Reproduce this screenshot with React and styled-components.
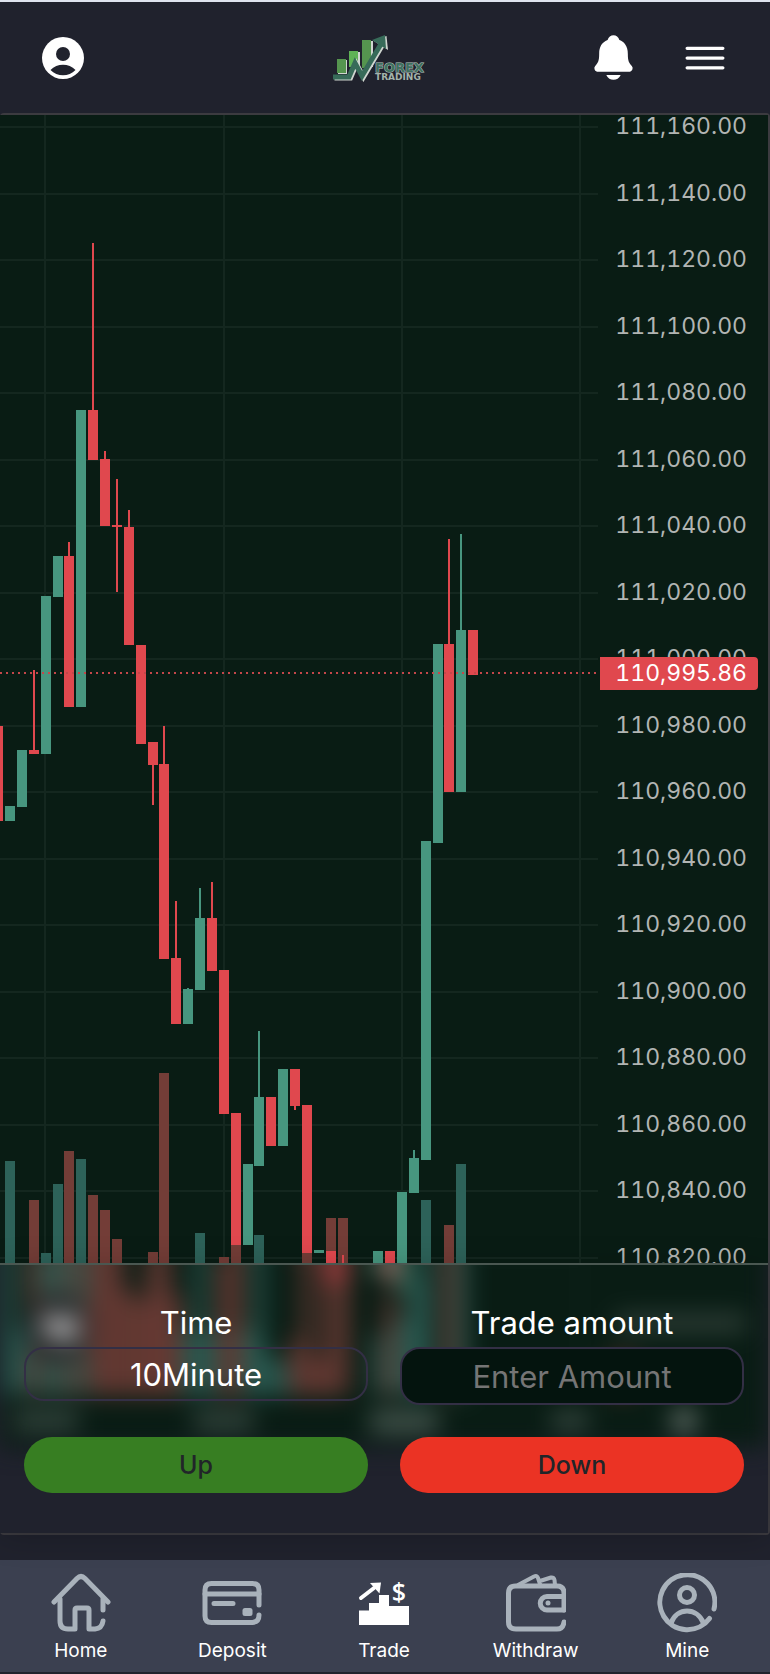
import { useState } from "react";
import styled, { createGlobalStyle } from "styled-components";
import { IoMenuOutline, IoNotifications } from "react-icons/io5";

const GlobalStyles = createGlobalStyle`
  *, *::before, *::after {
    box-sizing: border-box;
    margin: 0;
    padding: 0;
  }

  body {
    background-color: #20222d;
    color: #fff;
    font-family: Inter, "Liberation Sans", sans-serif;
  }
`;

const Page = styled.div`
  display: flex;
  flex-direction: column;
  min-height: 100vh;
  border-top: 2px solid #dfe4ee;
`;

const Header = styled.header`
  display: grid;
  grid-template-columns: 1fr auto 1fr;
  align-items: center;
  height: 111px;
  padding: 0 39px 0 26px;
`;

const Actions = styled.div`
  display: flex;
  align-items: center;
  justify-content: flex-end;
  gap: 40px;
`;

const IconButton = styled.button`
  display: flex;
  width: fit-content;
  padding: ${(props) => props.$pad || "0"};
  border: none;
  background: none;
  color: #fff;
  cursor: pointer;
`;

const Card = styled.main`
  position: relative;
  padding-bottom: 86px;
  border: 2px solid #3c3b40;
  border-left: none;
  border-radius: 4px;
`;

const ChartArea = styled.div`
  display: flex;
  height: 1332px;
  overflow: hidden;
  background-color: #091c14;
`;

const Plot = styled.svg`
  flex: 1;
  min-width: 0;
  height: 100%;
`;

const PriceScale = styled.svg`
  flex: none;
  width: 168px;
  height: 100%;
  font-size: 23px;
  font-variant-numeric: tabular-nums;
`;

// Sits over the lower part of the chart
const TradeForm = styled.form`
  position: absolute;
  right: 0;
  bottom: 0;
  left: 0;
  z-index: 0;
  display: grid;
  grid-template-columns: 1fr 1fr;
  column-gap: 32px;
  row-gap: 32px;
  padding: 34px 24px 40px;
  border-top: 2px solid #4a5751;
  box-shadow: 0 4px 30px rgba(0, 0, 0, 0.2);
`;

const FrostedLayer = styled.div`
  position: absolute;
  inset: 0;
  z-index: -1;
  display: flex;
  flex-direction: column;
  justify-content: flex-end;
  overflow: hidden;
  padding-bottom: 86px;
  background-color: #20222d;

  ${ChartArea} {
    flex: none;
    filter: blur(12px);
  }
`;

const Field = styled.div`
  display: flex;
  flex-direction: column;
`;

const Label = styled.label`
  font-size: 31px;
  line-height: 48px;
  text-align: center;
`;

const Select = styled.select`
  width: 100%;
  height: 54px;
  border: 2px solid #332f45;
  border-radius: 20px;
  appearance: none;
  background: transparent;
  color: #fff;
  font: inherit;
  font-size: 31px;
  text-align: center;
  text-align-last: center;
`;

const Input = styled.input`
  width: 100%;
  height: 58px;
  border: 2px solid #332f45;
  border-radius: 20px;
  background-color: #04140e;
  color: #fff;
  font: inherit;
  font-size: 31px;
  text-align: center;

  &::placeholder {
    color: #757575;
    opacity: 1;
  }
`;

const TradeButton = styled.button`
  height: 56px;
  border: none;
  border-radius: 28px;
  background-color: ${(props) => (props.$up ? "#377e22" : "#eb3324")};
  color: #212529;
  font: inherit;
  font-size: 25px;
  font-weight: 500;
  cursor: pointer;
`;

const Nav = styled.nav`
  display: grid;
  grid-template-columns: repeat(5, 1fr);
  height: 113px;
  margin-top: 25px;
  padding: 13px 7px 0 5px;
  border-bottom: 1px solid #20222d;
  background-color: #3b4050;
`;

const NavItem = styled.a`
  display: flex;
  flex-direction: column;
  align-items: center;
  gap: 6px;
  color: #fff;
  font-size: 19px;
  line-height: 24px;
  text-decoration: none;
`;

const NavIcon = styled.svg`
  width: 60px;
  height: 60px;
  color: ${(props) => (props.$active ? "#fff" : "#a9b2bb")};
  fill: none;
  stroke: currentColor;
  stroke-width: 5;
  stroke-linecap: round;
  stroke-linejoin: round;
`;

const GREEN = "#47967f";
const RED = "#e0484e";

const STEP = 11.875;
const FIRST_X = 10;
const BASE_PRICE = 111160;
const BASE_Y = 12;
const PX_PER_TICK = 3.325;
const VOLUME_BOTTOM = 1280;

// slot, direction, high, body top, body bottom, low
const candles = [
  [-1, 0, 611, 611, 706, 706],
  [0, 1, 691, 691, 706, 706],
  [1, 1, 635, 635, 692, 692],
  [2, 0, 555, 635, 639, 639],
  [3, 1, 481, 481, 639, 639],
  [4, 1, 441, 441, 482, 482],
  [5, 0, 427, 441, 592, 592],
  [6, 1, 295, 295, 592, 592],
  [7, 0, 128, 295, 345, 345],
  [8, 0, 336, 344, 411, 411],
  [9, 0, 364, 410, 412, 477],
  [10, 0, 395, 412, 530, 530],
  [11, 0, 530, 530, 629, 629],
  [12, 0, 627, 627, 650, 690],
  [13, 0, 611, 649, 844, 844],
  [14, 0, 786, 843, 909, 909],
  [15, 1, 873, 874, 909, 909],
  [16, 1, 773, 803, 875, 875],
  [17, 0, 767, 803, 856, 856],
  [18, 0, 855, 855, 999, 999],
  [19, 0, 998, 998, 1130, 1130],
  [20, 1, 1049, 1049, 1130, 1130],
  [21, 1, 916, 982, 1051, 1051],
  [22, 0, 982, 982, 1031, 1031],
  [23, 1, 954, 954, 1031, 1031],
  [24, 0, 954, 954, 991, 995],
  [25, 0, 990, 990, 1138, 1138],
  [26, 1, 1135, 1135, 1138, 1138],
  [27, 0, 1136, 1136, 1170, 1170],
  [28, 0, 1140, 1150, 1160, 1160],
  [31, 1, 1136, 1136, 1160, 1160],
  [32, 0, 1136, 1136, 1165, 1165],
  [33, 1, 1077, 1077, 1175, 1175],
  [34, 1, 1035, 1043, 1078, 1078],
  [35, 1, 726, 726, 1045, 1045],
  [36, 1, 529, 529, 728, 728],
  [37, 0, 424, 529, 677, 677],
  [38, 1, 419, 515, 677, 677],
  [39, 0, 515, 515, 560, 560],
];

// slot, direction, top
const volumes = [
  [0, 1, 1046], [1, 1, 1215], [2, 0, 1085], [3, 1, 1138], [4, 1, 1069],
  [5, 0, 1036], [6, 1, 1044], [7, 0, 1080], [8, 0, 1095], [9, 0, 1124],
  [10, 0, 1175], [11, 0, 1185], [12, 0, 1137], [13, 0, 958], [14, 0, 1180],
  [15, 1, 1215], [16, 1, 1118], [17, 1, 1215], [18, 0, 1142], [19, 0, 1129],
  [20, 1, 1215], [21, 1, 1120], [22, 1, 1240], [23, 1, 1250], [24, 0, 1225],
  [25, 0, 1137], [26, 0, 1245], [27, 0, 1103], [28, 0, 1103],
  [31, 1, 1220], [32, 0, 1180], [33, 1, 1205], [34, 1, 1165],
  [35, 1, 1085], [37, 0, 1110], [38, 1, 1049],
];

const prices = Array.from({ length: 18 }, (_, i) => BASE_PRICE - i * 20);
const gridColumns = [44, 223, 401, 579];
const LAST_PRICE_Y = 558;

const slotX = (slot) => Math.round(FIRST_X + slot * STEP);
const priceY = (price) => BASE_Y + (BASE_PRICE - price) * PX_PER_TICK;

function formatPrice(value) {
  return value.toLocaleString("en-US", { minimumFractionDigits: 2 });
}

function CandlePlot({ children, ...rest }) {
  return (
    <Plot {...rest}>
      <g fill="#14271f">
        {gridColumns.map((x) => (
          <rect key={x} x={x} y="0" width="2" height="1280" />
        ))}
        {prices.map((price) => (
          <rect key={price} x="0" y={Math.round(priceY(price)) - 1} width="598" height="2" />
        ))}
      </g>

      {volumes.map(([slot, up, top]) => (
        <rect
          key={slot}
          x={slotX(slot) - 5}
          y={top}
          width="10"
          height={VOLUME_BOTTOM - top}
          fill={up ? "#2d6259" : "#733d37"}
        />
      ))}

      {candles.map(([slot, up, high, top, bottom, low]) => (
        <g key={slot} fill={up ? GREEN : RED}>
          <rect x={slotX(slot) - 1} y={high} width="2" height={low - high} />
          <rect x={slotX(slot) - 5} y={top} width="10" height={bottom - top} />
        </g>
      ))}

      <line x1="0" x2="598" y1={LAST_PRICE_Y} y2={LAST_PRICE_Y} stroke="#c4474a" strokeWidth="2" strokeDasharray="2 4" />
      {children}
    </Plot>
  );
}

function PriceAxis() {
  return (
    <PriceScale>
      <g fill="#b2b5b3">
        {prices.map((price) => (
          <text key={price} x="147" y={Math.round(priceY(price)) + 7} textAnchor="end">
            {formatPrice(price)}
          </text>
        ))}
      </g>
      <path d="M0 542h154a4 4 0 0 1 4 4v25a4 4 0 0 1-4 4H0z" fill={RED} />
      <text x="147" y={LAST_PRICE_Y + 8} textAnchor="end" fill="#fff">
        {formatPrice(110995.86)}
      </text>
    </PriceScale>
  );
}

// The part of the chart that shows through the form, with the badge and the time axis
function FrostedChart() {
  return (
    <FrostedLayer aria-hidden="true">
      <ChartArea>
        <CandlePlot>
          <circle cx="58" cy="1213" r="34" fill="#292a2c" />
          <path d="M40 1202h38v22h-28v-9h-10z" fill="#b0b0b0" />
          <g fill="#3d4e47">
            <rect x="14" y="1298" width="64" height="16" />
            <rect x="194" y="1298" width="60" height="16" />
            <rect x="370" y="1298" width="68" height="18" fill="#4f5f58" />
            <rect x="552" y="1298" width="36" height="16" />
          </g>
        </CandlePlot>
        <PriceScale>
          <rect x="16" y="1200" width="130" height="16" fill="#33423b" />
          <circle cx="22" cy="1260" r="20" fill="#5c2a24" />
          <circle cx="84" cy="1306" r="13" fill="#65716b" />
        </PriceScale>
      </ChartArea>
    </FrostedLayer>
  );
}

function Logo() {
  const zigzag = "M1 43H17L23 29L30 42L49 10";

  return (
    <svg width="93" height="48" viewBox="0 0 93 48" role="img" aria-label="Forex Trading">
      <g fill="#cfd6d0">
        <path d="M6 26h9v14H6zM18 18h10v14H18zM31 7h10v26H31z" />
        <path d="M41 6.500 54.500 2 56 16z" />
      </g>
      <path d="M5 25h9v14H5z" fill="#55954f" />
      <path d="M17 17h9v16h-9z" fill="#5fb356" />
      <path d="M30 6h9v28h-9z" fill="#55954f" />
      <path d={zigzag} transform="translate(1.500 1)" fill="none" stroke="#cfd6d0" strokeWidth="5" />
      <path d={zigzag} fill="none" stroke="#376b59" strokeWidth="5" />
      <path d="M40 6 53 1l1 14z" fill="#376b59" />
      <g fontFamily="DejaVu Sans, sans-serif" fontWeight="700" fill="#3f705f" stroke="#b9c6c0">
        <text x="43" y="38" fontSize="13" strokeWidth="1" paintOrder="stroke">FOREX</text>
        <text x="43" y="46" fontSize="9" strokeWidth="0" fill="#a3b3ab">TRADING</text>
      </g>
    </svg>
  );
}

function AccountIcon() {
  return (
    <svg width="42" height="42" viewBox="0 0 42 42" aria-hidden="true">
      <circle cx="21" cy="21" r="21" fill="#fff" />
      <circle cx="21" cy="17" r="7" fill="#20222d" />
      <path d="M8.500 33C15 26 27 26 33.500 33C27 40 15 40 8.500 33z" fill="#20222d" />
    </svg>
  );
}

const navItems = [
  {
    label: "Home",
    icon: (
      <>
        <path d="M3 29 26 5.500Q30 1.500 34 5.500L57 29" />
        <path d="M9 26V48Q9 56 17 56H24V37Q24 35 26 35H36Q38 35 38 37V56H44Q51 55.500 52 48M52 26V37" />
      </>
    ),
  },
  {
    label: "Deposit",
    icon: (
      <>
        <path d="M57 32V17Q57 10.500 50.500 10.500H9.500Q3 10.500 3 17V43Q3 49.500 9.500 49.500H50.500Q57 49 57 42" />
        <path d="M3 21H57M12 30.500H31" />
        <rect x="40.500" y="35" width="10" height="8" rx="2.500" fill="currentColor" stroke="none" />
      </>
    ),
  },
  {
    label: "Trade",
    active: true,
    icon: (
      <g fill="currentColor" stroke="none">
        <path d="M5 52V37.500H15V30H25V22H35V33H55V52z" />
        <path d="M7 25 20 15" fill="none" stroke="currentColor" strokeWidth="4" />
        <path d="M16 10 27 9.500 25.500 20.500z" />
        <text x="45" y="28" fontSize="25" fontWeight="600" fontFamily="Open Sans, sans-serif" textAnchor="middle">$</text>
      </g>
    ),
  },
  {
    label: "Withdraw",
    icon: (
      <>
        <path d="M58 49Q57 56 51 56H10Q2.500 56 2.500 49V20Q2.500 13 9.500 13H51Q58 13 58 20V37" />
        <path d="M58 23.500H41a6.750 6.750 0 0 0 0 13.500H58" />
        <path d="M12 12 28 3.500Q31 2 32 5L34 11M34 8 45 4.500Q48 4 48.500 7L49 12" strokeWidth="4" />
        <circle cx="42" cy="30" r="2.500" fill="currentColor" stroke="none" />
      </>
    ),
  },
  {
    label: "Mine",
    icon: (
      <>
        <path d="M57 36A27.500 27.500 0 1 0 52.500 45.500" />
        <circle cx="30" cy="22" r="7.500" />
        <path d="M14 50C20 34 40 34 46.500 50" />
      </>
    ),
  },
];

function App() {
  const [time, setTime] = useState("10");
  const [amount, setAmount] = useState("");

  return (
    <>
      <GlobalStyles />
      <Page>
        <Header>
          <IconButton $pad="16px" aria-label="Account">
            <AccountIcon />
          </IconButton>
          <Logo />
          <Actions>
            <IconButton aria-label="Notifications">
              <IoNotifications size={51} />
            </IconButton>
            <IconButton aria-label="Menu">
              <IoMenuOutline size={52} />
            </IconButton>
          </Actions>
        </Header>

        <Card>
          <ChartArea>
            <CandlePlot role="img" aria-label="Candlestick price chart" />
            <PriceAxis />
          </ChartArea>

          <TradeForm onSubmit={(e) => e.preventDefault()}>
            <FrostedChart />
            <Field>
              <Label htmlFor="time">Time</Label>
              <Select id="time" value={time} onChange={(e) => setTime(e.target.value)}>
                <option value="10">10Minute</option>
              </Select>
            </Field>
            <Field>
              <Label htmlFor="amount">Trade amount</Label>
              <Input
                id="amount"
                inputMode="decimal"
                placeholder="Enter Amount"
                value={amount}
                onChange={(e) => setAmount(e.target.value)}
              />
            </Field>
            <TradeButton $up>Up</TradeButton>
            <TradeButton>Down</TradeButton>
          </TradeForm>
        </Card>

        <Nav>
          {navItems.map(({ label, icon, active }) => (
            <NavItem key={label} href={`#${label.toLowerCase()}`} aria-current={active ? "page" : undefined}>
              <NavIcon viewBox="0 0 60 60" $active={active} aria-hidden="true">
                {icon}
              </NavIcon>
              {label}
            </NavItem>
          ))}
        </Nav>
      </Page>
    </>
  );
}

export default App;
